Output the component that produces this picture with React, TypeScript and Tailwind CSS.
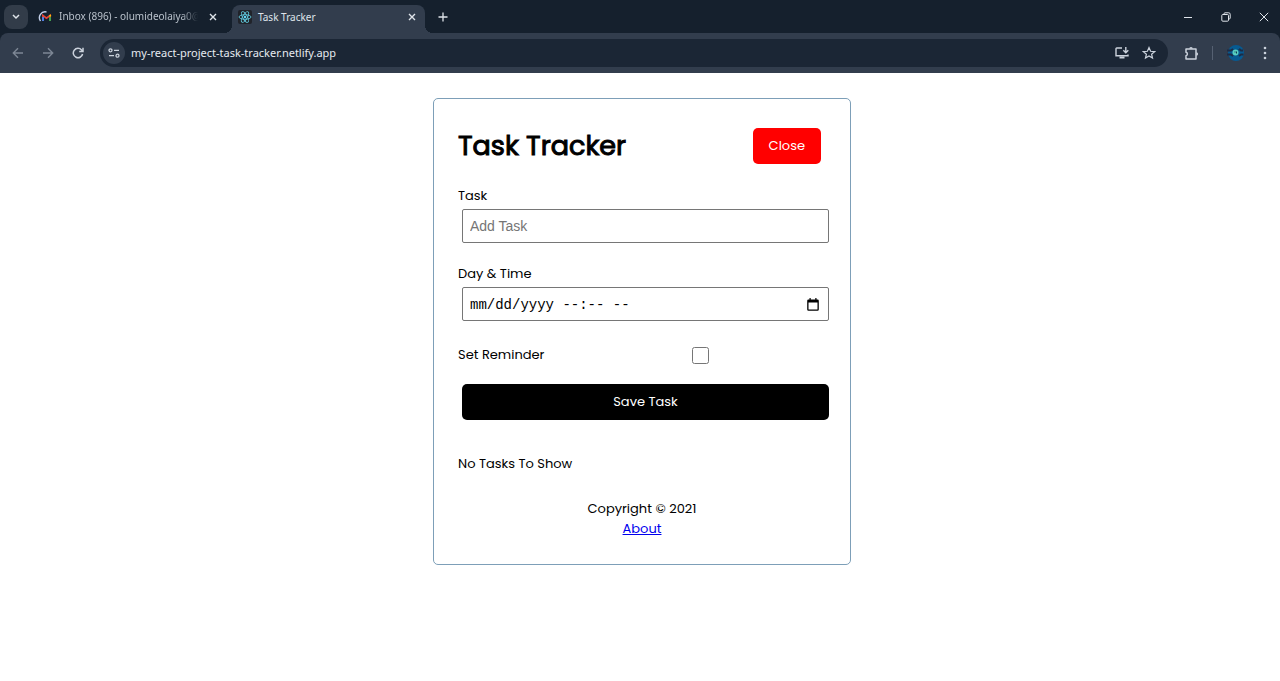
import { useState } from "react";
import type { ReactNode } from "react";

const flare = "pointer-events-none absolute bottom-0 size-2";

function IconButton({ label, className = "", children }: { label: string; className?: string; children: ReactNode }) {
  return (
    <button type="button" aria-label={label} className={`flex shrink-0 items-center justify-center ${className}`}>
      {children}
    </button>
  );
}

function CloseGlyph() {
  return (
    <svg viewBox="0 0 8 8" className="size-2" fill="none" stroke="currentColor" strokeWidth="1.4">
      <path d="M1 1l6 6M7 1L1 7" />
    </svg>
  );
}

function MailIcon() {
  return (
    <svg viewBox="0 0 14 14" className="size-3.5 shrink-0">
      <path d="M5 11V5.500l3.500 2.600L12 5.500V11" fill="none" stroke="#ea4335" strokeWidth="1.800" />
      <path d="M5 11V7" stroke="#4285f4" strokeWidth="1.800" />
      <path d="M12 11V7" stroke="#34a853" strokeWidth="1.800" />
      <path d="M11.100 5.500l1-1 1 .500v1.500h-2z" fill="#fbbc04" />
      <path d="M2.500 11A5.800 5.800 0 0 1 8.500 2" fill="none" stroke="#c3d0ea" strokeWidth="1.400" />
    </svg>
  );
}

function ReactIcon() {
  return (
    <svg viewBox="0 0 14 14" className="size-3.5 shrink-0">
      <rect width="14" height="14" rx="2" fill="#20232a" />
      <g fill="none" stroke="#61c8dc" strokeWidth="0.9">
        <ellipse cx="7" cy="7" rx="6" ry="2.3" />
        <ellipse cx="7" cy="7" rx="6" ry="2.3" transform="rotate(60 7 7)" />
        <ellipse cx="7" cy="7" rx="6" ry="2.3" transform="rotate(120 7 7)" />
      </g>
      <circle cx="7" cy="7" r="1.2" fill="#61dafb" />
    </svg>
  );
}

function TabStrip() {
  return (
    <div className="flex h-[33px] items-stretch bg-[#15202d] text-[#dfe4ea]">
      <div className="flex items-center pl-1">
        <IconButton label="Search tabs" className="size-6 rounded-lg bg-[#323c49]">
          <svg viewBox="0 0 8 6" className="h-1.5 w-2" fill="none" stroke="currentColor" strokeWidth="1.5">
            <path d="M1 1l3 3 3-3" />
          </svg>
        </IconButton>
      </div>
      <div className="flex w-[204px] items-center gap-[7px] pl-2.5 text-[#b9c1cb]">
        <MailIcon />
        <span className="w-[139px] text-[10px] whitespace-nowrap [mask-image:linear-gradient(to_right,black_88%,transparent)]">
          Inbox (896) - olumideolaiya0@
        </span>
        <IconButton label="Close Inbox tab" className="size-4 text-[#dfe4ea]"><CloseGlyph /></IconButton>
      </div>
      <div className="relative mt-[5px] flex w-[193px] items-center gap-1.5 rounded-t-lg bg-[#323d4d] pr-[5px] pb-1 pl-1.5">
        <span className={`${flare} -left-2 bg-[radial-gradient(circle_at_0_0,transparent_8px,#323d4d_8px)]`} />
        <ReactIcon />
        <span className="flex-1 text-[10px]">Task Tracker</span>
        <IconButton label="Close Task Tracker tab" className="size-4"><CloseGlyph /></IconButton>
        <span className={`${flare} -right-2 bg-[radial-gradient(circle_at_100%_0,transparent_8px,#323d4d_8px)]`} />
      </div>
      <IconButton label="New tab" className="ml-2.5 w-4">
        <svg viewBox="0 0 10 10" className="size-2.5" fill="none" stroke="currentColor" strokeWidth="1.3">
          <path d="M5 0.5v9M0.5 5h9" />
        </svg>
      </IconButton>
      <div className="ml-auto flex">
        <IconButton label="Minimize" className="w-[38px]">
          <svg viewBox="0 0 10 10" className="size-2.5" stroke="currentColor"><path d="M1 5.5h8" /></svg>
        </IconButton>
        <IconButton label="Restore" className="w-[38px]">
          <svg viewBox="0 0 10 10" className="size-2.5" fill="none" stroke="currentColor">
            <rect x="0.8" y="2.5" width="6.7" height="6.7" rx="1" />
            <path d="M3 2.5V1.8a1 1 0 0 1 1-1h3.7a1.5 1.5 0 0 1 1.5 1.5V6a1 1 0 0 1-1 1h-.7" />
          </svg>
        </IconButton>
        <IconButton label="Close window" className="w-[35px] pl-[3px]">
          <svg viewBox="0 0 10 10" className="size-2.5" fill="none" stroke="currentColor"><path d="M.8.8l8.4 8.4M9.2.8L.8 9.2" /></svg>
        </IconButton>
      </div>
    </div>
  );
}

function Toolbar() {
  return (
    <div className="bg-[#15202d]">
      <div className="flex h-10 items-center rounded-t-lg bg-[#323d4d] text-[#cbd2dc]">
        <IconButton label="Back" className="ml-[3px] w-[30px] text-[#7d8795]">
          <svg viewBox="0 0 12 12" className="size-3" fill="none" stroke="currentColor" strokeWidth="1.4"><path d="M11 6H1.5M6 1.3L1.3 6 6 10.7" /></svg>
        </IconButton>
        <IconButton label="Forward" className="w-[30px] text-[#7d8795]">
          <svg viewBox="0 0 12 12" className="size-3" fill="none" stroke="currentColor" strokeWidth="1.4"><path d="M1 6h9.5M6 1.3L10.7 6 6 10.7" /></svg>
        </IconButton>
        <IconButton label="Reload" className="w-[30px]">
          <svg viewBox="0 0 12 12" className="size-3" fill="none" stroke="currentColor" strokeWidth="1.5"><path d="M10.6 7A4.7 4.7 0 1 1 9.6 3L11 4.3M11 .8v3.7H7.2" /></svg>
        </IconButton>
        <div className="ml-[7px] flex h-7 flex-1 items-center gap-[5px] rounded-full bg-[#1b2635] pr-2.5 pl-[3px]">
          <IconButton label="View site information" className="size-[22px] rounded-full bg-[#323d4d]">
            <svg viewBox="0 0 12 10" className="h-2.5 w-3" fill="none" stroke="currentColor" strokeWidth="1.3">
              <circle cx="2.5" cy="2.3" r="1.5" /><path d="M6 2.3h5M1 7.7h5" /><circle cx="9.5" cy="7.7" r="1.5" />
            </svg>
          </IconButton>
          <input
            aria-label="Address"
            defaultValue="my-react-project-task-tracker.netlify.app"
            className="min-w-0 flex-1 bg-transparent px-px text-[11px] text-[#e6eaf0] outline-none"
          />
          <IconButton label="Install app" className="w-[22px]">
            <svg viewBox="0 0 14 12" className="h-3 w-3.5" fill="none" stroke="currentColor" strokeWidth="1.4">
              <path d="M7 1H1.7a.7.7 0 0 0-.7.7v7.1h12V7.5" /><path d="M4.5 10.5h5" strokeWidth="2" /><path d="M10.8 0v5M8.3 3.2l2.5 2.5 2.5-2.5" />
            </svg>
          </IconButton>
          <IconButton label="Bookmark" className="-mr-0.5 w-[22px]">
            <svg viewBox="0 0 14 14" className="size-3.5" fill="none" stroke="currentColor" strokeWidth="1.2">
              <path d="M7 1.600l1.600 3.700 4 .300-3 2.600.900 3.900L7 10l-3.500 2.100.900-3.900-3-2.600 4-.300z" />
            </svg>
          </IconButton>
        </div>
        <IconButton label="Extensions" className="ml-3 w-[22px]">
          <svg viewBox="0 0 15 15" className="size-[15px]" fill="none" stroke="currentColor" strokeWidth="1.5">
            <path d="M2 3h10v10H2v-3.300a1.800 1.800 0 0 0 0-3.500z" strokeLinejoin="round" />
            <path d="M5.200 2.700a1.800 1.800 0 0 1 3.600 0zM12.300 6.200a1.800 1.800 0 0 1 0 3.600z" fill="currentColor" stroke="none" />
          </svg>
        </IconButton>
        <span className="ml-2.5 h-3.5 w-px bg-[#566172]" />
        <IconButton label="Profile" className="ml-3 w-[22px]">
          <svg viewBox="0 0 18 18" className="size-[18px]">
            <circle cx="9" cy="9" r="8" fill="#075a91" />
            <path d="M0 6.500h4l2-1.500M0 10.500h4l2 1.500M12 5l2 1.500h2M12 12l2-1.500h2.500" fill="none" stroke="#1d2b45" strokeWidth="1.800" />
            <circle cx="8.500" cy="8.500" r="3" fill="#58cfc0" />
            <path d="M7.500 8h1M9.500 9.500v-2M11.500 6l1.500-1.500" stroke="#123a52" strokeWidth="1" />
          </svg>
        </IconButton>
        <IconButton label="Browser menu" className="mr-[7px] ml-2.5 w-4">
          <svg viewBox="0 0 4 14" className="h-3.5 w-1" fill="currentColor"><circle cx="2" cy="2" r="1.300" /><circle cx="2" cy="7" r="1.300" /><circle cx="2" cy="12" r="1.300" /></svg>
        </IconButton>
      </div>
    </div>
  );
}

export default function App() {
  const [task, setTask] = useState("");
  const [day, setDay] = useState("");
  const [reminder, setReminder] = useState(false);
  const field = "mx-1 h-[34px] rounded-xs border border-[#767676] px-[7px]";

  return (
    <div className="min-h-screen bg-white text-black">
      <div className="font-['Noto_Sans',sans-serif]">
        <TabStrip />
        <Toolbar />
      </div>
      <div className="pt-[25px] pl-1">
        <main className="mx-auto w-full max-w-[418px] rounded-[5px] border border-[#7d9fb8] px-6 pt-[29px] pb-[25px] font-[Poppins,Inter,sans-serif] text-[13px] leading-5">
          <header className="flex h-9 items-center justify-between pr-[5px]">
            <h1 className="text-[27px] leading-9 font-normal [-webkit-text-stroke:1px_black]">Task Tracker</h1>
            <button type="button" className="h-9 rounded-[5px] bg-[#ff0000] px-4 text-white">Close</button>
          </header>
          <form className="-mr-[7px] mt-[22px]" onSubmit={(event) => event.preventDefault()}>
            <div className="flex flex-col gap-[3px]">
              <label htmlFor="task">Task</label>
              <input id="task" type="text" placeholder="Add Task" value={task} onChange={(e) => setTask(e.target.value)} className={`${field} font-['Liberation_Sans',Arial,sans-serif] text-[14px] placeholder:text-[#757575]`} />
            </div>
            <div className="mt-[21px] flex flex-col gap-[3px]">
              <label htmlFor="day">Day &amp; Time</label>
              <div className={`${field} flex items-center`}>
                <input id="day" type="text" placeholder="mm/dd/yyyy --:-- --" value={day} onChange={(e) => setDay(e.target.value)} className="min-w-0 flex-1 pt-0.5 font-['Liberation_Mono',monospace] text-[14px] outline-none placeholder:text-black" />
                <IconButton label="Show date picker" className="size-4">
                  <svg viewBox="0 0 12 13" className="h-[13px] w-3">
                    <path d="M2.500 0h1.200v1.500h4.600V0h1.200v1.500h1A1.300 1.300 0 0 1 11.800 2.800v8.600a1.300 1.300 0 0 1-1.300 1.300h-9A1.300 1.300 0 0 1 .2 11.400V2.800a1.300 1.300 0 0 1 1.300-1.300h1zM1.500 4.500v6.900h9V4.500z" fillRule="evenodd" />
                  </svg>
                </IconButton>
              </div>
            </div>
            <div className="mt-6 flex h-5 items-center">
              <label htmlFor="reminder" className="flex-1">Set Reminder</label>
              <div className="flex flex-2 justify-center pr-3">
                <input id="reminder" type="checkbox" checked={reminder} onChange={(e) => setReminder(e.target.checked)} className="size-[17px]" />
              </div>
            </div>
            <div className="mt-[19px] flex px-1">
              <button type="submit" className="h-9 flex-1 rounded-[5px] bg-black text-white">Save Task</button>
            </div>
          </form>
          <p className="mt-[34px]">No Tasks To Show</p>
          <footer className="mt-[25px] text-center">
            <p>Copyright © 2021</p>
            <a href="#about" className="text-[#0000ee] underline">About</a>
          </footer>
        </main>
      </div>
    </div>
  );
}
